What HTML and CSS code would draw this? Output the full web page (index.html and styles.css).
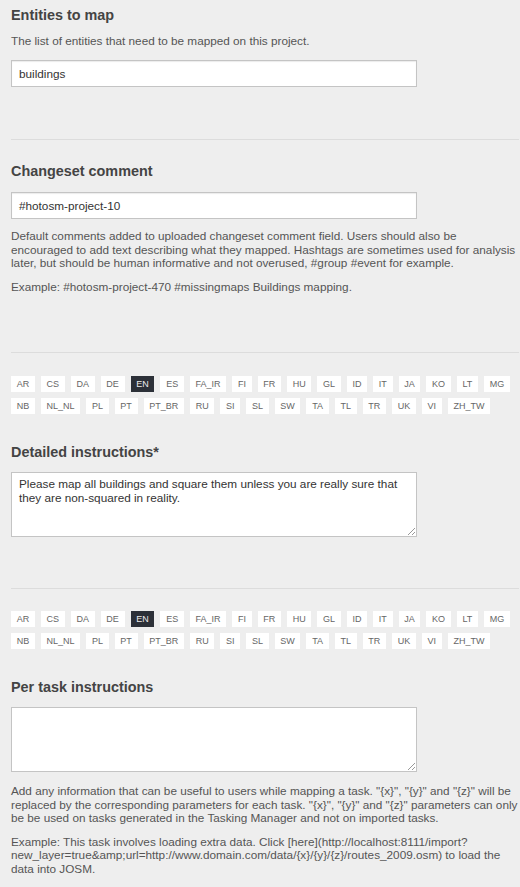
FILE: index.html
```html
<!DOCTYPE html>
<html>
<head>
<meta charset="utf-8">
<link rel="stylesheet" href="styles.css">
</head>
<body>
<div class="page">
  <section class="field">
    <h3 class="title">Entities to map</h3>
    <p class="desc">The list of entities that need to be mapped on this project.</p>
    <div class="input">buildings</div>
  </section>
  <hr class="divider d1">
  <section class="field">
    <h3 class="title">Changeset comment</h3>
    <div class="input">#hotosm-project-10</div>
    <p class="help">Default comments added to uploaded changeset comment field. Users should also be encouraged to add text describing what they mapped. Hashtags are sometimes used for analysis later, but should be human informative and not overused, #group #event for example.</p>
    <p class="help">Example: #hotosm-project-470 #missingmaps Buildings mapping.</p>
  </section>
  <hr class="divider d2">
  <section class="field">
    <div class="langs">
      <span class="lang">AR</span><span class="lang">CS</span><span class="lang">DA</span><span class="lang">DE</span><span class="lang active">EN</span><span class="lang">ES</span><span class="lang">FA_IR</span><span class="lang">FI</span><span class="lang">FR</span><span class="lang">HU</span><span class="lang">GL</span><span class="lang">ID</span><span class="lang">IT</span><span class="lang">JA</span><span class="lang">KO</span><span class="lang">LT</span><span class="lang">MG</span><span class="lang">NB</span><span class="lang">NL_NL</span><span class="lang">PL</span><span class="lang">PT</span><span class="lang">PT_BR</span><span class="lang">RU</span><span class="lang">SI</span><span class="lang">SL</span><span class="lang">SW</span><span class="lang">TA</span><span class="lang">TL</span><span class="lang">TR</span><span class="lang">UK</span><span class="lang">VI</span><span class="lang">ZH_TW</span>
    </div>
    <h3 class="title t3">Detailed instructions*</h3>
    <div class="textarea">Please map all buildings and square them unless you are really sure that they are non-squared in reality.<span class="grip"></span></div>
  </section>
  <hr class="divider d3">
  <section class="field">
    <div class="langs">
      <span class="lang">AR</span><span class="lang">CS</span><span class="lang">DA</span><span class="lang">DE</span><span class="lang active">EN</span><span class="lang">ES</span><span class="lang">FA_IR</span><span class="lang">FI</span><span class="lang">FR</span><span class="lang">HU</span><span class="lang">GL</span><span class="lang">ID</span><span class="lang">IT</span><span class="lang">JA</span><span class="lang">KO</span><span class="lang">LT</span><span class="lang">MG</span><span class="lang">NB</span><span class="lang">NL_NL</span><span class="lang">PL</span><span class="lang">PT</span><span class="lang">PT_BR</span><span class="lang">RU</span><span class="lang">SI</span><span class="lang">SL</span><span class="lang">SW</span><span class="lang">TA</span><span class="lang">TL</span><span class="lang">TR</span><span class="lang">UK</span><span class="lang">VI</span><span class="lang">ZH_TW</span>
    </div>
    <h3 class="title t3">Per task instructions</h3>
    <div class="textarea ta4"><span class="grip"></span></div>
    <p class="help h4">Add any information that can be useful to users while mapping a task. "{x}", "{y}" and "{z}" will be replaced by the corresponding parameters for each task. "{x}", "{y}" and "{z}" parameters can only be be used on tasks generated in the Tasking Manager and not on imported tasks.</p>
    <p class="help">Example: This task involves loading extra data. Click [here](http://localhost:8111/import?new_layer=true&amp;amp;url=http://www.domain.com/data/{x}/{y}/{z}/routes_2009.osm) to load the data into JOSM.</p>
  </section>
</div>
</body>
</html>
```
FILE: styles.css
```css
html, body {
  margin: 0;
  padding: 0;
  background: #eeeeee;
}
body {
  font-family: "Liberation Sans", Arial, sans-serif;
  color: #555;
}
.page {
  padding: 6px 0 0 11px;
}
.field {
  display: block;
}
.title {
  margin: 0;
  font-size: 14.4px;
  line-height: 18px;
  font-weight: bold;
  color: #444;
}
.desc {
  margin: 10px 0 0;
  font-size: 11.75px;
  line-height: 14px;
}
.input {
  margin-top: 12px;
  width: 406px;
  height: 27px;
  box-sizing: border-box;
  background: #fff;
  border: 1px solid #c4c4c4;
  box-shadow: inset 0 1px 1px rgba(0,0,0,0.08);
  padding: 0 7px;
  font-size: 11.75px;
  line-height: 25px;
  color: #333;
}
.help {
  margin: 10px 0 0;
  font-size: 11.75px;
  line-height: 13.5px;
}
.help + .help {
  margin-top: 10px;
}
.divider {
  display: block;
  margin: 0 1px 0 0;
  border: 0;
  border-top: 1px solid #dcdcdc;
  height: 0;
}
.d1 { margin-top: 52px; }
.d1 + .field { margin-top: 22px; }
.d2 { margin-top: 59px; }
.d3 { margin-top: 51px; }
.d2 + .field { margin-top: 23px; }
.d3 + .field { margin-top: 22px; }
.langs {
  display: flex;
  flex-wrap: wrap;
  gap: 6px 6px;
  width: 509px;
}
.lang {
  display: block;
  height: 16px;
  line-height: 16px;
  padding: 0 5.7px;
  background: #fff;
  font-size: 9px;
  color: #666;
}
.lang.active {
  background: #2c3038;
  color: #eee;
}
.t3 {
  margin-top: 29px;
}
.textarea {
  position: relative;
  margin-top: 11px;
  width: 406px;
  height: 65px;
  box-sizing: border-box;
  background: #fff;
  border: 1px solid #c4c4c4;
  padding: 4px 7px;
  font-size: 11.75px;
  line-height: 13.5px;
  color: #333;
}
.ta4 {
  margin-top: 11px;
}
.grip {
  position: absolute;
  right: 1px;
  bottom: 1px;
  width: 7px;
  height: 7px;
  background: linear-gradient(135deg, transparent 45%, #999 45%, #999 55%, transparent 55%, transparent 72%, #999 72%, #999 82%, transparent 82%);
}
.h4 {
  margin-top: 12px;
}
```
